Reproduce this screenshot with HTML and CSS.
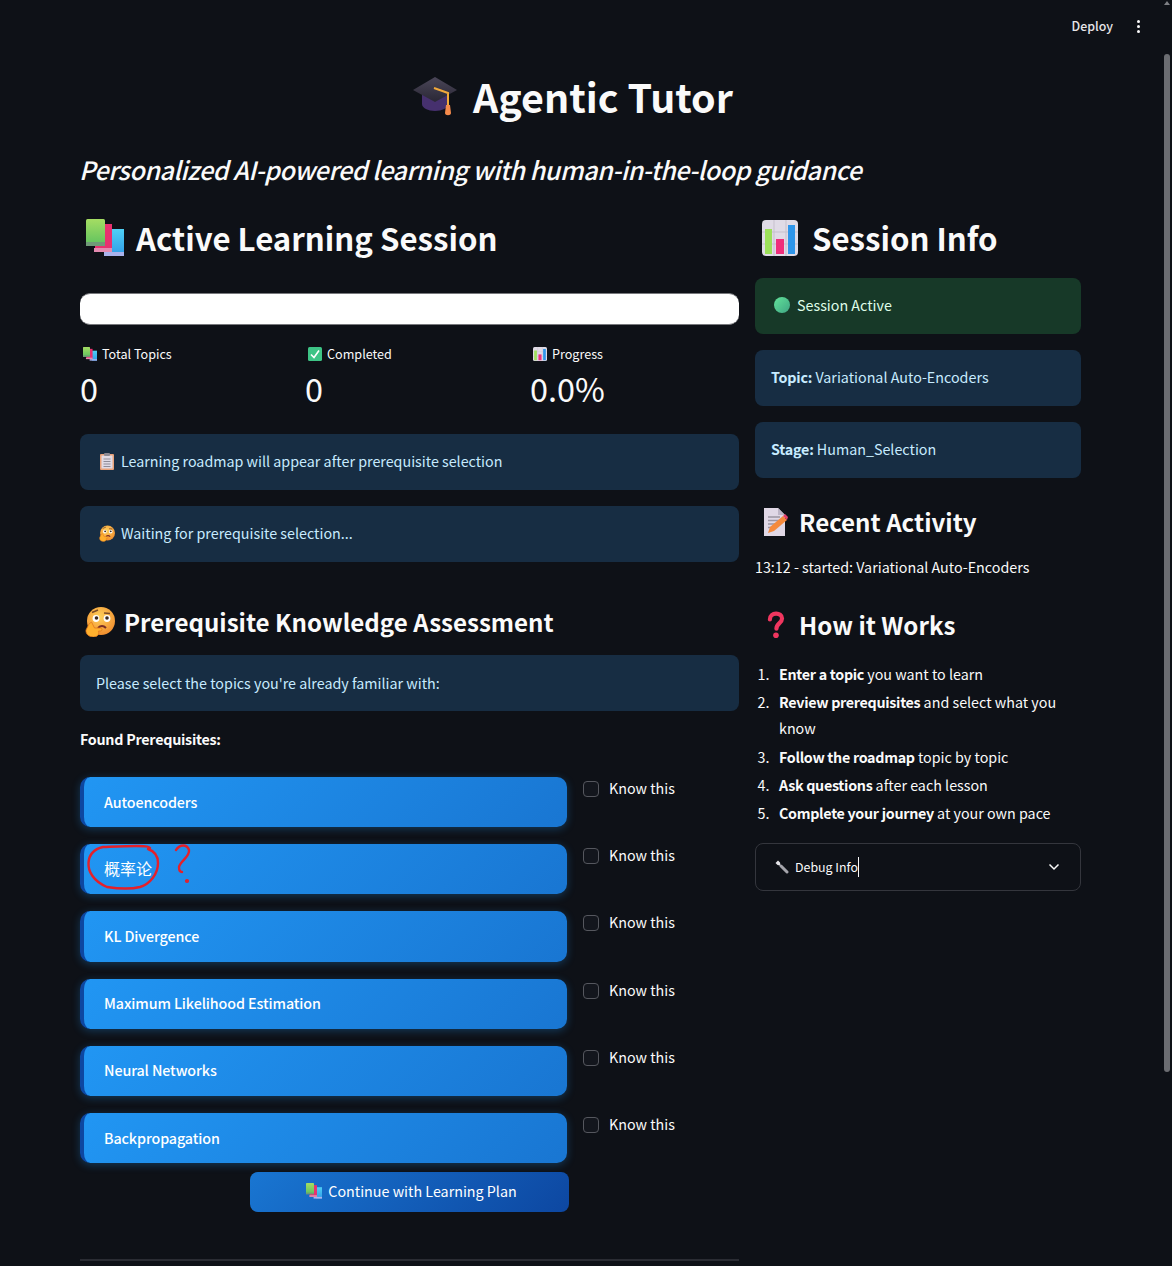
FILE: index.html
```html
<!DOCTYPE html>
<html lang="en">
<head>
    <meta charset="UTF-8">
    <meta name="viewport" content="width=device-width, initial-scale=1.0">
    <title>Agentic Tutor</title>
    <link rel="stylesheet" href="styles.css">
</head>
<body>

    <!-- Emoji drawings, reused below -->
    <svg class="defs" aria-hidden="true">
        <defs>
            <linearGradient id="capTop" x1="0" y1="0" x2="0" y2="1"><stop offset="0" stop-color="#4a4658"/><stop offset="1" stop-color="#2a2735"/></linearGradient>
            <linearGradient id="dotGreen" x1="0" y1="0" x2="1" y2="1"><stop offset="0" stop-color="#62e39a"/><stop offset="1" stop-color="#3fa583"/></linearGradient>
            <linearGradient id="bookGreen" x1="0" y1="0" x2="0" y2="1"><stop offset="0" stop-color="#a5dd63"/><stop offset="1" stop-color="#5fc25f"/></linearGradient>
            <linearGradient id="bookBlue" x1="0" y1="0" x2="0" y2="1"><stop offset="0" stop-color="#4fd0f5"/><stop offset="1" stop-color="#2f9be8"/></linearGradient>
            <radialGradient id="faceGrad" cx="0.45" cy="0.35" r="0.7"><stop offset="0" stop-color="#ffd25c"/><stop offset="1" stop-color="#f08a2c"/></radialGradient>
        </defs>
        <symbol id="i-cap" viewBox="0 0 46 40">
            <path d="M10 17v11c0 4 6 7 13 7s13-3 13-7V17z" fill="#46306e"/>
            <path d="M23 1 45 14 23 26 1 14z" fill="url(#capTop)"/>
            <path d="M22 12l14 5v12" fill="none" stroke="#f2a93b" stroke-width="2"/>
            <path d="M34 29h4l1 8c0 3-6 3-6 0z" fill="#f58a4b"/>
        </symbol>
        <symbol id="i-books" viewBox="0 0 38 38">
            <rect x="24" y="10" width="14" height="27" fill="url(#bookBlue)"/>
            <rect x="18" y="33" width="20" height="4" fill="#a9b2ec"/>
            <rect x="9" y="5" width="17" height="27" fill="#e8316f"/>
            <rect x="8" y="29" width="18" height="4" fill="#e48ab0"/>
            <rect x="0" y="0" width="19" height="26" rx="1.5" fill="url(#bookGreen)"/>
            <rect x="0" y="23" width="19" height="4" fill="#6f9a77"/>
        </symbol>
        <symbol id="i-chart" viewBox="0 0 36 36">
            <rect width="36" height="36" rx="4" fill="#e0dbe6"/>
            <path d="M12 0v36M24 0v36M0 12h36M0 24h36" stroke="#c6c1cd" stroke-width="1"/>
            <rect x="3" y="9" width="7" height="25" fill="#9ce05a"/>
            <rect x="14" y="19" width="8" height="15" fill="#ef2f7b"/>
            <rect x="26" y="5" width="7" height="29" fill="#2f96ea"/>
        </symbol>
        <symbol id="i-check" viewBox="0 0 14 14">
            <rect width="14" height="14" rx="1.5" fill="#3ec486"/>
            <path d="M3 7.5 6 10.5 11 3.5" fill="none" stroke="#fff" stroke-width="1.6"/>
        </symbol>
        <symbol id="i-clip" viewBox="0 0 14 17">
            <rect y="1" width="14" height="16" rx="1" fill="#e9a27a"/>
            <rect x="1.5" y="2.5" width="11" height="13" fill="#e0dbe6"/>
            <rect x="4" y="0" width="6" height="3" rx="1" fill="#8c8a94"/>
            <path d="M3.5 6h7M3.5 8.5h7M3.5 11h7M3.5 13.500h7" stroke="#8f8c98" stroke-width="1"/>
        </symbol>
        <symbol id="i-think" viewBox="0 0 30 30">
            <circle cx="16" cy="14" r="14" fill="url(#faceGrad)"/>
            <circle cx="11" cy="11.500" r="3.400" fill="#fff"/><circle cx="22" cy="11.500" r="3.400" fill="#fff"/>
            <circle cx="11.500" cy="11" r="1.800" fill="#3b2a24"/><circle cx="22" cy="11" r="1.800" fill="#3b2a24"/>
            <path d="M7 5.500l6-2.500M19 6l6 0.500" stroke="#7a4a26" stroke-width="1.500" fill="none"/>
            <path d="M13 21q4-4 8 0" stroke="#7a2f26" stroke-width="2" fill="none"/>
            <path d="M4 17l2.500-2 3 6h6c2 0 2 3 0 3h-2c1 3-1 6-5 6-4.500 0-8-3-7.500-7z" fill="#ffb02e" stroke="#e0761c" stroke-width="0.800"/>
        </symbol>
        <symbol id="i-memo" viewBox="0 0 25 28">
            <path d="M1 0h14l7 7v21H1z" fill="#e0d8e6"/>
            <path d="M15 0l7 7h-7z" fill="#bdb5c6"/>
            <path d="M5 9h12M5 12.500h12M5 16h8M5 19.500h6" stroke="#9b95a3" stroke-width="1.300"/>
            <path d="M5 25l2-6L20 8l4 4-13 11z" fill="#f58a3c"/>
            <path d="M20 8l2-2 3 3-1 3z" fill="#e8416c"/>
        </symbol>
        <symbol id="i-question" viewBox="0 0 20 30">
            <path d="M4 9c0-8 13-8 13-1 0 5-6 5-6 11" fill="none" stroke="#f0365f" stroke-width="4.500" stroke-linecap="round"/>
            <circle cx="10.500" cy="26" r="3" fill="#f0365f"/>
        </symbol>
        <symbol id="i-wrench" viewBox="0 0 14 14">
            <path d="M0.500 3 3 0.500 5 2.500 5.500 5 7 6.500 6.500 7 5 5.500 2.500 5z" fill="#e4e4e8"/>
            <path d="M6 6 12 12" stroke="#a5a5ac" stroke-width="3" stroke-linecap="round"/>
        </symbol>
    </svg>

    <header class="toolbar">
        <span class="deploy">Deploy</span>
        <span class="kebab"><i></i><i></i><i></i></span>
    </header>

    <div class="scrollbar">
        <span class="scroll-arrow"></span>
        <span class="scroll-thumb"></span>
    </div>

    <main class="page">
        <h1 class="title"><svg class="title-icon"><use href="#i-cap"/></svg>Agentic Tutor</h1>
        <p class="tagline">Personalized AI-powered learning with human-in-the-loop guidance</p>

        <div class="columns">
            <section class="col-main">
                <h2 class="h-big"><svg class="ico-books"><use href="#i-books"/></svg>Active Learning Session</h2>
                <div class="progress"></div>

                <div class="metrics">
                    <div class="metric">
                        <div class="metric-label"><svg class="ico-sm"><use href="#i-books"/></svg>Total Topics</div>
                        <div class="metric-value">0</div>
                    </div>
                    <div class="metric">
                        <div class="metric-label"><svg class="ico-sm"><use href="#i-check"/></svg>Completed</div>
                        <div class="metric-value">0</div>
                    </div>
                    <div class="metric">
                        <div class="metric-label"><svg class="ico-sm"><use href="#i-chart"/></svg>Progress</div>
                        <div class="metric-value">0.0%</div>
                    </div>
                </div>

                <div class="alert alert-info alert-note"><svg class="ico-alert"><use href="#i-clip"/></svg>Learning roadmap will appear after prerequisite selection</div>
                <div class="alert alert-info alert-note"><svg class="ico-alert"><use href="#i-think"/></svg>Waiting for prerequisite selection...</div>

                <h3 class="h-mid h-prereq"><svg class="ico-think"><use href="#i-think"/></svg>Prerequisite Knowledge Assessment</h3>
                <div class="alert alert-info alert-tight">Please select the topics you're already familiar with:</div>
                <p class="found">Found Prerequisites:</p>

                <div class="topic-row">
                    <button class="topic">Autoencoders</button>
                    <label class="know"><span class="box"></span>Know this</label>
                </div>
                <div class="topic-row">
                    <button class="topic topic-cjk" lang="zh-CN">概率论
                        <svg class="scribble" viewBox="0 0 120 50">
                            <path d="M70 4C69 1 50 2 23 3 14 5 9 11 8.500 19 8 27 13 37 27 43 40 45 52 45 60 43 70 40 78 30 78 19 78 12 74 7 68 5"/>
                            <path d="M96 6C100 0 107 0 109 6 110 13 100 17 99 23 99 26 100 28 102 28"/>
                            <circle cx="107" cy="37" r="0.900"/>
                        </svg>
                    </button>
                    <label class="know"><span class="box"></span>Know this</label>
                </div>
                <div class="topic-row">
                    <button class="topic">KL Divergence</button>
                    <label class="know"><span class="box"></span>Know this</label>
                </div>
                <div class="topic-row">
                    <button class="topic">Maximum Likelihood Estimation</button>
                    <label class="know"><span class="box"></span>Know this</label>
                </div>
                <div class="topic-row">
                    <button class="topic">Neural Networks</button>
                    <label class="know"><span class="box"></span>Know this</label>
                </div>
                <div class="topic-row topic-row-last">
                    <button class="topic">Backpropagation</button>
                    <label class="know"><span class="box"></span>Know this</label>
                </div>

                <div class="continue-wrap">
                    <button class="continue"><svg class="ico-sm"><use href="#i-books"/></svg>Continue with Learning Plan</button>
                </div>
                <hr class="rule">
            </section>

            <aside class="col-side">
                <h2 class="h-big h-session"><svg class="ico-chart"><use href="#i-chart"/></svg>Session Info</h2>
                <div class="alert alert-success"><svg class="ico-dot" viewBox="0 0 16 16"><circle cx="8" cy="8" r="8" fill="url(#dotGreen)"/></svg>Session Active</div>
                <div class="alert alert-info"><b>Topic:</b> Variational Auto-Encoders</div>
                <div class="alert alert-info"><b>Stage:</b> Human_Selection</div>

                <h3 class="h-mid h-side"><svg class="ico-side"><use href="#i-memo"/></svg>Recent Activity</h3>
                <p class="activity">13:12 - started: Variational Auto-Encoders</p>

                <h3 class="h-mid h-side h-how"><svg class="ico-side"><use href="#i-question"/></svg>How it Works</h3>
                <ol class="steps">
                    <li><b>Enter a topic</b> you want to learn</li>
                    <li><b>Review prerequisites</b> and select what you know</li>
                    <li><b>Follow the roadmap</b> topic by topic</li>
                    <li><b>Ask questions</b> after each lesson</li>
                    <li><b>Complete your journey</b> at your own pace</li>
                </ol>

                <div class="expander">
                    <span class="expander-label"><svg class="ico-wrench"><use href="#i-wrench"/></svg>Debug Inf<span class="caret">o</span></span>
                    <svg class="chevron" viewBox="0 0 12 8"><path d="M1.500 1.500 6 6 10.500 1.500" fill="none" stroke="#fafafa" stroke-width="1.500"/></svg>
                </div>
            </aside>
        </div>
    </main>

</body>
</html>
```

FILE: styles.css
```css
/* Basic Reset */
* {
    margin: 0;
    padding: 0;
    box-sizing: border-box;
}

html, body {
    height: 100%;
    overflow: hidden;
}

body {
    position: relative;
    font-family: "Noto Sans CJK SC", "Noto Sans CJK JP", sans-serif;
    font-size: 14.3px;
    line-height: 26px;
    color: #fafafa;
    background-color: #0e1117;
}

.defs {
    position: absolute;
    width: 0;
    height: 0;
}

/* Top bar */
.toolbar {
    height: 54px;
    display: flex;
    justify-content: flex-end;
    align-items: center;
    padding: 0 32px 2px 0;
    gap: 24px;
}

.deploy {
    font-size: 12.4px;
    font-weight: 500;
    color: #e6e6e8;
}

.kebab {
    display: flex;
    flex-direction: column;
    gap: 2px;
}

.kebab i {
    width: 3px;
    height: 3px;
    border-radius: 50%;
    background-color: #fafafa;
}

/* Window scrollbar */
.scrollbar {
    position: absolute;
    top: 0;
    right: 0;
    width: 9px;
    height: 100%;
}

.scroll-arrow {
    position: absolute;
    top: 1px;
    left: 1px;
    border-left: 3px solid transparent;
    border-right: 3px solid transparent;
    border-bottom: 4px solid #7d7f84;
}

.scroll-thumb {
    position: absolute;
    top: 54px;
    left: 1px;
    width: 6px;
    height: 1018px;
    border-radius: 3px;
    background-color: #6b6d72;
}

/* Page */
.page {
    padding: 0 91px 0 80px;
}

.title {
    display: flex;
    justify-content: center;
    align-items: center;
    height: 88px;
    padding: 0 16px 4px 0;
    font-size: 39.4px;
    line-height: 84px;
    font-weight: 700;
}

.title-icon {
    width: 46px;
    height: 40px;
    margin-right: 15px;
}

.tagline {
    margin: 9px 0 0 -1px;
    font-size: 25.2px;
    line-height: 36px;
    font-weight: 500;
    font-style: italic;
    letter-spacing: -0.5px;
}

.columns {
    display: flex;
    gap: 16px;
    margin-top: 25px;
}

.col-main {
    width: 659px;
    flex-shrink: 0;
}

.col-side {
    width: 326px;
}

/* Headings */
.h-big {
    display: flex;
    align-items: center;
    height: 52px;
    font-size: 31.200px;
    font-weight: 600;
    line-height: 52px;
}

.h-mid {
    display: flex;
    align-items: center;
    font-size: 24.100px;
    font-weight: 600;
    line-height: 40px;
}

.ico-books {
    width: 38px;
    height: 38px;
    margin: 0 12px 0 6px;
}

.ico-chart {
    width: 36px;
    height: 36px;
    margin: 0 14px 0 7px;
}

.ico-think {
    width: 30px;
    height: 30px;
    margin: 0 9px 0 5px;
}

.ico-side {
    width: 25px;
    height: 28px;
    margin: 0 11px 0 8px;
}

.ico-sm {
    width: 14px;
    height: 14px;
    margin-right: 5px;
    flex-shrink: 0;
}

.ico-alert {
    width: 16px;
    height: 17px;
    margin: 0 6px 0 3px;
    vertical-align: -3px;
}

.ico-dot {
    width: 16px;
    height: 16px;
    margin: 0 7px 0 3px;
    vertical-align: -2px;
}

/* Progress + metrics */
.progress {
    height: 32px;
    margin-top: 29px;
    background-color: #fff;
    border-top: 1px solid #77787c;
    border-bottom: 1px solid #77787c;
    border-radius: 10px;
}

.metrics {
    display: flex;
    gap: 16px;
    margin-top: 17px;
    margin-bottom: 22px;
}

.metric {
    flex: 1;
}

.metric-label {
    display: flex;
    align-items: center;
    height: 24px;
    padding-left: 3px;
    font-size: 12.6px;
}

.metric-value {
    font-size: 32.400px;
    line-height: 48px;
    margin-top: -2px;
}

/* Alert boxes */
.alert {
    height: 56px;
    padding: 15px 16px;
    margin-bottom: 16px;
    border-radius: 8px;
    line-height: 26px;
}

.alert-info {
    background-color: #172d43;
    color: #c7ebff;
}

.alert-success {
    background-color: #173928;
    color: #dffde9;
}

.alert-tight {
    margin-bottom: 0;
}

.alert b {
    font-weight: 600;
    letter-spacing: -0.2px;
}

.alert-note,
.col-side .alert {
    padding-top: 14px;
}

.h-session {
    margin-bottom: 14px;
}

/* Prerequisites */
.h-prereq {
    margin-top: 40px;
    margin-bottom: 13px;
}

.found {
    margin-top: 15px;
    margin-bottom: 25px;
    font-weight: 600;
    letter-spacing: -0.26px;
}

.topic-row {
    display: grid;
    grid-template-columns: 487px 1fr;
    column-gap: 16px;
    margin-bottom: 17px;
}

.topic-row-last {
    margin-bottom: 9px;
}

.topic {
    position: relative;
    height: 50.200px;
    padding: 0 0 2px 20px;
    text-align: left;
    border: none;
    border-left: 4px solid #0d47a1;
    border-radius: 10px;
    font-family: inherit;
    font-size: 14.3px;
    font-weight: 500;
    letter-spacing: -0.1px;
    color: #fff;
    background: linear-gradient(135deg, #2196f3, #1976d2);
    box-shadow: 0 2px 8px rgba(33, 150, 243, 0.3);
}

.topic-cjk {
    font-size: 16px;
    font-weight: 400;
    letter-spacing: 0;
}

.scribble {
    position: absolute;
    top: 0;
    left: -4px;
    width: 120px;
    height: 50px;
    overflow: visible;
    fill: none;
    stroke: #e4202a;
    stroke-width: 2.400;
    stroke-linecap: round;
}

.know {
    display: flex;
    align-items: flex-start;
    gap: 10px;
    height: 26px;
    line-height: 22px;
}

.box {
    width: 16px;
    height: 16px;
    margin-top: 4px;
    border: 1px solid #55575e;
    border-radius: 4px;
    background-color: #13161d;
}

.continue-wrap {
    display: flex;
    justify-content: flex-end;
    padding-right: 170px;
}

.continue {
    display: flex;
    justify-content: center;
    align-items: center;
    width: 319px;
    height: 40px;
    padding: 0 0 3px 4px;
    border: none;
    border-radius: 8px;
    font-family: inherit;
    font-size: 14.3px;
    color: #fff;
    background: linear-gradient(135deg, #1976d2, #0d47a1);
}

.continue .ico-sm {
    width: 16px;
    height: 16px;
    margin-right: 6px;
}

.rule {
    margin-top: 47px;
    border: none;
    height: 2px;
    background-color: #2a2c33;
}

/* Sidebar column */
.h-side {
    margin-top: 24px;
}

.h-how {
    margin-top: 25px;
}

.activity {
    margin-top: 12px;
}

.steps {
    margin-top: 16px;
    padding-left: 24px;
}

.steps li {
    padding-bottom: 2.300px;
}

.steps li::marker {
    content: counter(list-item) ".   ";
    font-weight: 400;
}

.steps b {
    font-weight: 600;
    letter-spacing: -0.3px;
}

.expander {
    display: flex;
    justify-content: space-between;
    align-items: center;
    height: 48px;
    margin-top: 15px;
    padding: 0 20px 0 19px;
    border: 1px solid #34363d;
    border-radius: 8px;
}

.expander-label {
    display: flex;
    align-items: center;
    font-size: 12.4px;
}

.ico-wrench {
    width: 14px;
    height: 14px;
    margin-right: 6px;
}

.caret {
    display: inline-block;
    line-height: 20px;
    border-right: 1px solid #fafafa;
}

.chevron {
    width: 12px;
    height: 8px;
}
```
